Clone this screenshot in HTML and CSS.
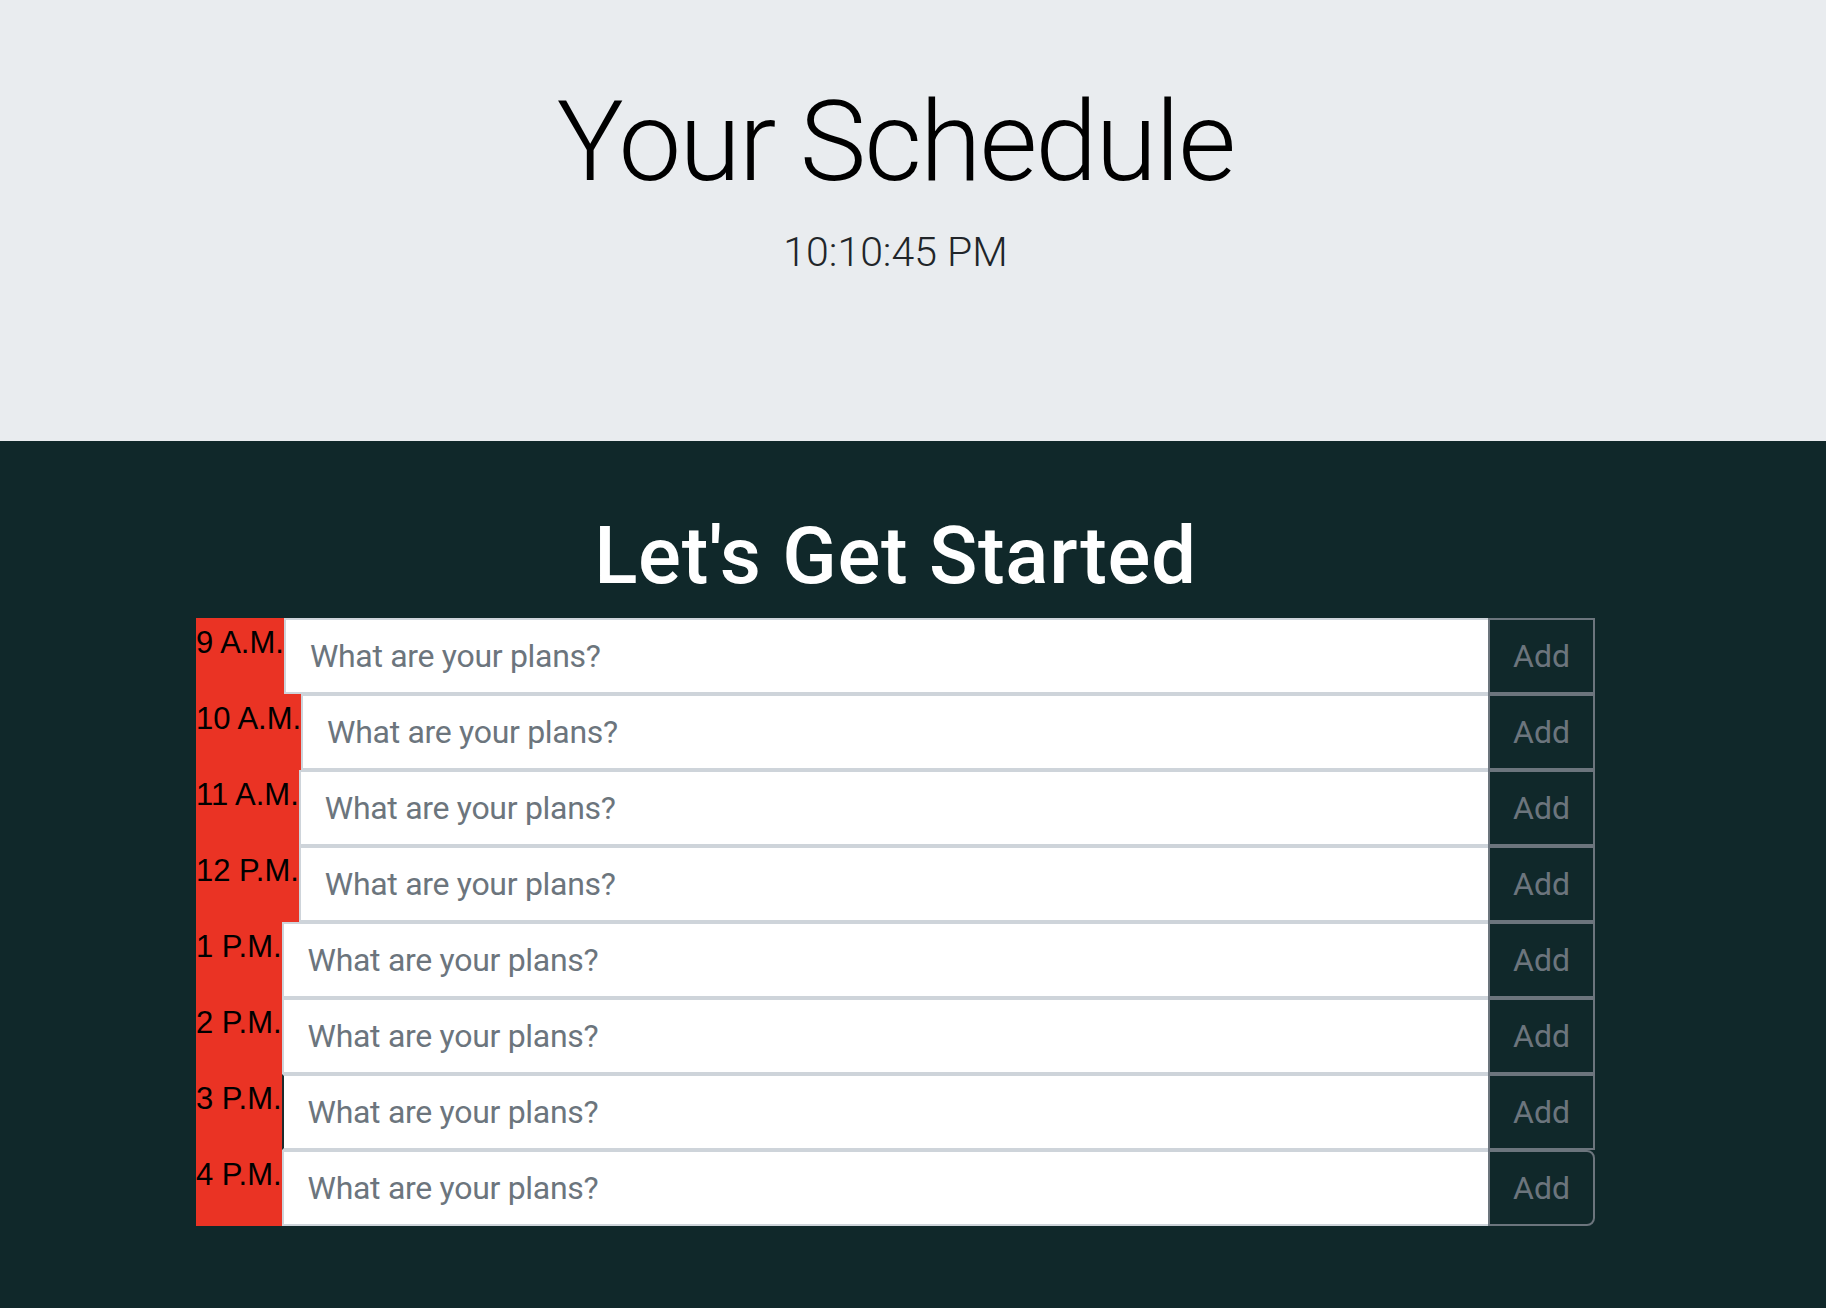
FILE: index.html
```html
<!DOCTYPE html>
<html lang="en">
<head>
<meta charset="utf-8">
<title>Your Schedule</title>
<link rel="stylesheet" href="styles.css">
</head>
<body>
<header class="jumbotron">
  <div class="wrap">
    <h1 class="title">Your Schedule</h1>
    <p class="clock">10:10:45 PM</p>
  </div>
</header>
<main class="planner">
  <div class="wrap">
    <h2 class="intro">Let's Get Started</h2>
    <form class="day">
      <div class="hour-row"><span class="hour">9 A.M.</span><input class="plan" type="text" placeholder="What are your plans?"><button class="add" type="button">Add</button></div>
      <div class="hour-row"><span class="hour">10 A.M.</span><input class="plan" type="text" placeholder="What are your plans?"><button class="add" type="button">Add</button></div>
      <div class="hour-row"><span class="hour">11 A.M.</span><input class="plan" type="text" placeholder="What are your plans?"><button class="add" type="button">Add</button></div>
      <div class="hour-row"><span class="hour">12 P.M.</span><input class="plan" type="text" placeholder="What are your plans?"><button class="add" type="button">Add</button></div>
      <div class="hour-row"><span class="hour">1 P.M.</span><input class="plan" type="text" placeholder="What are your plans?"><button class="add" type="button">Add</button></div>
      <div class="hour-row"><span class="hour">2 P.M.</span><input class="plan" type="text" placeholder="What are your plans?"><button class="add" type="button">Add</button></div>
      <div class="hour-row"><span class="hour">3 P.M.</span><input class="plan plan-edge" type="text" placeholder="What are your plans?"><button class="add" type="button">Add</button></div>
      <div class="hour-row"><span class="hour">4 P.M.</span><input class="plan" type="text" placeholder="What are your plans?"><button class="add add-last" type="button">Add</button></div>
    </form>
  </div>
</main>
</body>
</html>
```
FILE: styles.css
```css
* { box-sizing: border-box; }

html, body {
  margin: 0;
  padding: 0;
}

body {
  background: #10282a;
  min-height: 1308px;
  font-family: "Roboto", "Liberation Sans", sans-serif;
}

.wrap {
  width: 1791px;
}

.jumbotron {
  background: #e9ecef;
  height: 441px;
  padding-top: 86px;
  text-align: center;
}

.title {
  margin: 0;
  font-family: "Roboto", "Liberation Sans", sans-serif;
  font-weight: 300;
  font-size: 112px;
  line-height: 112px;
  letter-spacing: -2px;
  color: #000;
}

.clock {
  margin: 34px 0 0;
  font-family: "Roboto", "Liberation Sans", sans-serif;
  font-weight: 300;
  font-size: 41px;
  line-height: 40px;
  color: #212529;
}

.planner {
  padding-top: 75px;
}

.intro {
  margin: 0 0 22px;
  text-align: center;
  font-family: "Roboto", "Liberation Sans", sans-serif;
  font-weight: 500;
  font-size: 80px;
  line-height: 80px;
  letter-spacing: 0.7px;
  color: #fff;
}

.day {
  margin-left: 196px;
  width: 1399px;
  display: flex;
  flex-direction: column;
}

.hour-row {
  display: flex;
  height: 76px;
}

.hour {
  background: #ea3324;
  color: #000;
  font-family: "Liberation Sans", Arial, sans-serif;
  font-size: 31px;
  line-height: 45px;
  padding-top: 2px;
  white-space: nowrap;
}

.plan {
  flex: 1;
  min-width: 0;
  height: 76px;
  margin: 0;
  border: 2px solid #ced4da;
  border-radius: 0;
  background: #fff;
  padding: 0 24px;
  font-family: "Roboto", "Liberation Sans", sans-serif;
  font-size: 32px;
  letter-spacing: -0.3px;
  color: #495057;
  outline: none;
}

.plan::placeholder {
  color: #6c757d;
}

.plan-edge {
  border-left-color: #1d2b2d;
}

.add {
  width: 107px;
  height: 76px;
  margin: 0 0 0 -2px;
  border: 2px solid #6c757d;
  border-radius: 0;
  background: transparent;
  color: #6c757d;
  font-family: "Roboto", "Liberation Sans", sans-serif;
  font-size: 32px;
  padding: 0;
  position: relative;
}

.add-last {
  border-radius: 0 8px 8px 0;
}
```
